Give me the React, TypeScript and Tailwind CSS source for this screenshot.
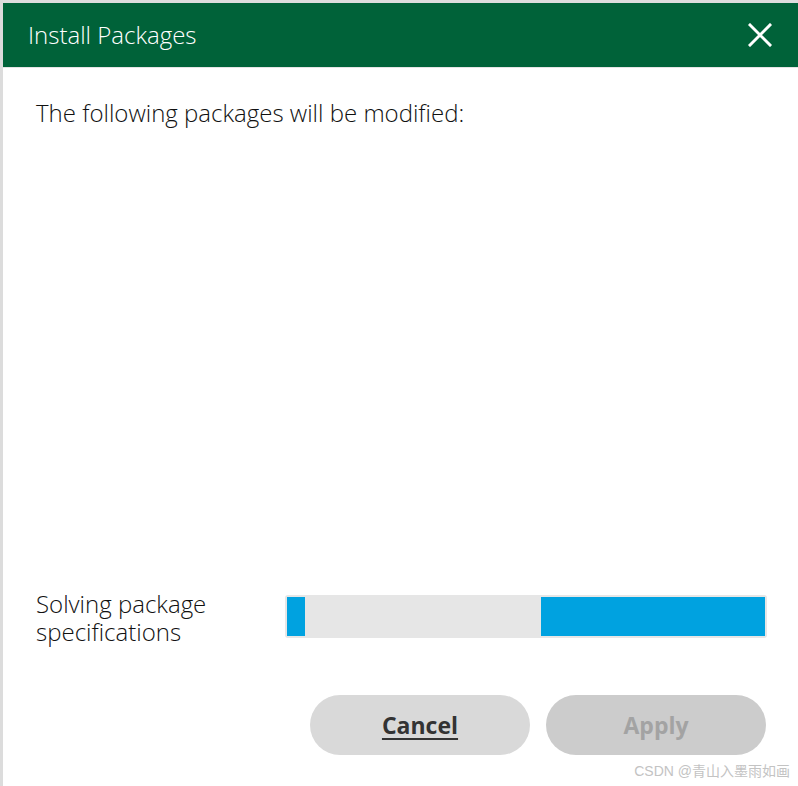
export default function App() {
  return (
    <div
      className="relative w-[798px] h-[786px] overflow-hidden bg-white"
      style={{ fontFamily: '"Open Sans", "Noto Sans", sans-serif' }}
    >
      {/* page behind the dialog */}
      <div className="absolute inset-x-0 top-0 h-[3px] bg-[#dedede]" />
      <div className="absolute left-0 top-0 bottom-0 w-[3px] bg-[#dcdcdc]" />

      <div className="absolute left-[3px] top-[3px] right-0 bottom-0 flex flex-col bg-white">
        <div className="flex h-[64px] shrink-0 items-center justify-between bg-[#006239] pl-[25px] pr-[26px]">
          <span className="text-[24px] font-light text-white">Install Packages</span>
          <svg width="24" height="24" viewBox="0 0 24 24" stroke="white" strokeWidth="3" strokeLinecap="square">
            <path d="M2 2 L22 22 M22 2 L2 22" />
          </svg>
        </div>
        <div className="h-px shrink-0 bg-[#e4e4e4]" />

        <div className="flex flex-1 flex-col pl-[33px] pr-[31px] pt-[31px]">
          <p className="h-[28px] text-[24px] font-light leading-[28px] text-[#111]">
            The following packages will be modified:
          </p>

          <div className="mt-[463px] flex items-start">
            <p className="w-[249px] shrink-0 text-[24px] font-light leading-[28px] text-[#111]">
              Solving package specifications
            </p>
            <div className="mt-[5px] flex h-[43px] w-[482px] shrink-0 items-stretch rounded-[3px] bg-[#e6e6e6] p-[2px]">
              <div className="w-[18px] bg-[#00a2e0]" />
              <div className="flex-1" />
              <div className="w-[224px] bg-[#00a2e0]" />
            </div>
          </div>

          <div className="mt-[49px] flex justify-end gap-[16px] pr-[1px]">
            <button className="h-[60px] w-[220px] rounded-full bg-[#d9d9d9] text-[23px] font-bold text-[#333] underline underline-offset-4">
              Cancel
            </button>
            <button className="h-[60px] w-[220px] rounded-full bg-[#cccccc] text-[23px] font-bold text-[#a3a3a3]">
              Apply
            </button>
          </div>
          <div
            className="mt-[6px] -mr-[23px] flex justify-end text-[14px] text-[#c3c3c3]"
            style={{ fontFamily: '"Liberation Sans", "Noto Sans CJK SC", sans-serif' }}
          >
            CSDN @青山入墨雨如画
          </div>
        </div>
      </div>
    </div>
  )
}
